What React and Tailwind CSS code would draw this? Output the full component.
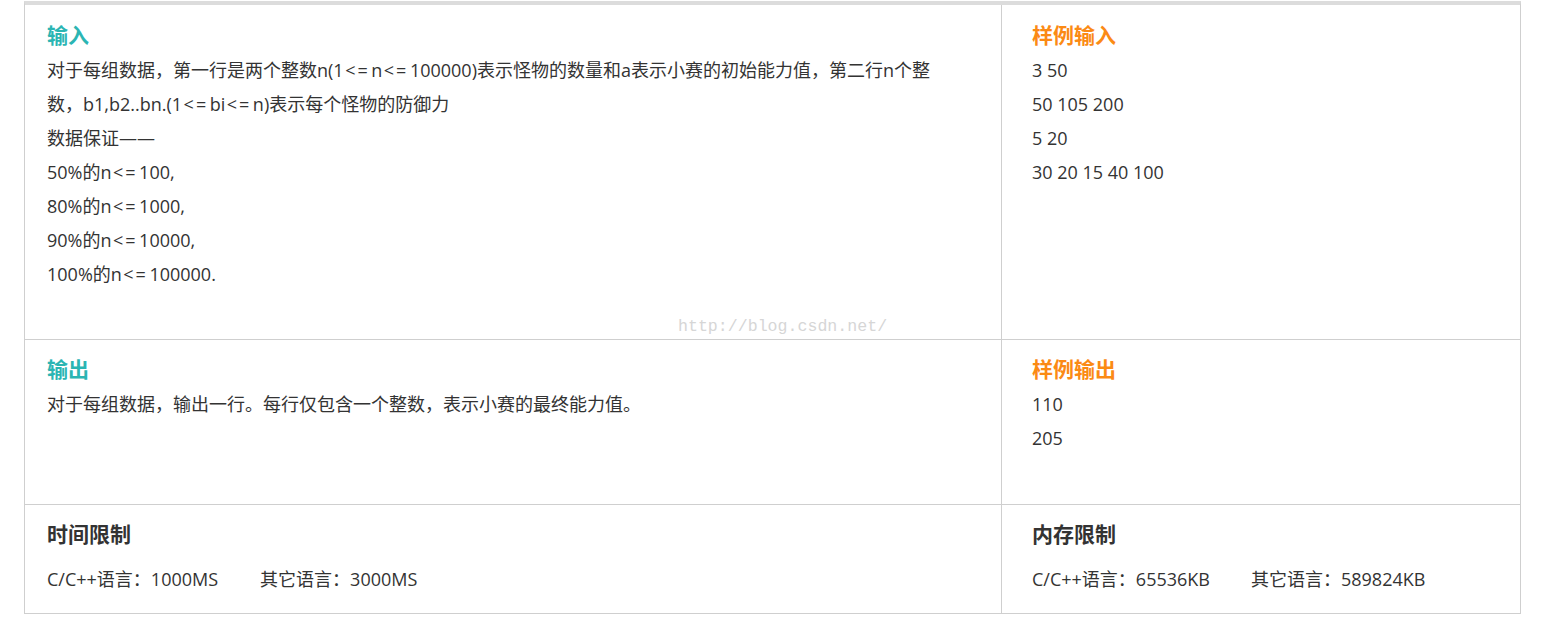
import React from 'react';

const font = { fontFamily: '"Open Sans", "Noto Sans CJK SC", sans-serif' };

const Heading = ({ children, color }) => (
  <div className={`text-[21px] leading-[30px] font-bold mb-[3px] ${color}`}>{children}</div>
);

const Lines = ({ lines }) => (
  <div className="text-[18px] leading-[34px] text-[#333]">
    {lines.map((l, i) => (
      <div key={i} className="whitespace-nowrap">{l}</div>
    ))}
  </div>
);

// the "<=" in the source font is drawn wider
const Le = () => <span className="px-[1.5px] tracking-[2px]">{'<='}</span>;

const App = () => {
  return (
    <div className="min-h-screen bg-white pt-px" style={font}>
      <div className="ml-[24px] w-[1497px] border-t-[4px] border-t-[#dcdcdc] border-x border-b border-[#cfcfcf]">
        {/* 输入 / 样例输入 */}
        <div className="relative flex h-[335px] border-b border-[#cfcfcf]">
          <div className="w-[977px] border-r border-[#cfcfcf] pl-[22px] pt-[15px]">
            <Heading color="text-[#2bb5b3]">输入</Heading>
            <Lines
              lines={[
                <>对于每组数据，第一行是两个整数n(1<Le />n<Le />100000)表示怪物的数量和a表示小赛的初始能力值，第二行n个整</>,
                <>数，b1,b2..bn.(1<Le />bi<Le />n)表示每个怪物的防御力</>,
                '数据保证——',
                <>50%的n<Le />100,</>,
                <>80%的n<Le />1000,</>,
                <>90%的n<Le />10000,</>,
                <>100%的n<Le />100000.</>,
              ]}
            />
          </div>
          <div className="flex-1 pl-[30px] pt-[15px]">
            <Heading color="text-[#fb8a14]">样例输入</Heading>
            <Lines lines={['3 50', '50 105 200', '5 20', '30 20 15 40 100']} />
          </div>
          {/* watermark */}
          <div
            className="absolute left-[653px] top-[310px] text-[16.6px] leading-[24px] text-[#d6d6d6] pointer-events-none"
            style={{ fontFamily: '"Liberation Mono", monospace' }}
          >
            http://blog.csdn.net/
          </div>
        </div>

        {/* 输出 / 样例输出 */}
        <div className="flex h-[165px] border-b border-[#cfcfcf]">
          <div className="w-[977px] border-r border-[#cfcfcf] pl-[22px] pt-[14px]">
            <Heading color="text-[#2bb5b3]">输出</Heading>
            <Lines lines={['对于每组数据，输出一行。每行仅包含一个整数，表示小赛的最终能力值。']} />
          </div>
          <div className="flex-1 pl-[30px] pt-[14px]">
            <Heading color="text-[#fb8a14]">样例输出</Heading>
            <Lines lines={['110', '205']} />
          </div>
        </div>

        {/* 时间限制 / 内存限制 */}
        <div className="flex h-[108px]">
          <div className="w-[977px] border-r border-[#cfcfcf] pl-[22px] pt-[14px]">
            <div className="text-[21px] leading-[30px] font-bold text-[#333] mb-[13px]">时间限制</div>
            <div className="text-[18px] leading-[34px] text-[#333] whitespace-nowrap">
              <span>C/C++语言：1000MS</span>
              <span className="ml-[42px]">其它语言：3000MS</span>
            </div>
          </div>
          <div className="flex-1 pl-[30px] pt-[14px]">
            <div className="text-[21px] leading-[30px] font-bold text-[#333] mb-[13px]">内存限制</div>
            <div className="text-[18px] leading-[34px] text-[#333] whitespace-nowrap">
              <span>C/C++语言：65536KB</span>
              <span className="ml-[41px]">其它语言：589824KB</span>
            </div>
          </div>
        </div>
      </div>
    </div>
  );
};

export default App;
